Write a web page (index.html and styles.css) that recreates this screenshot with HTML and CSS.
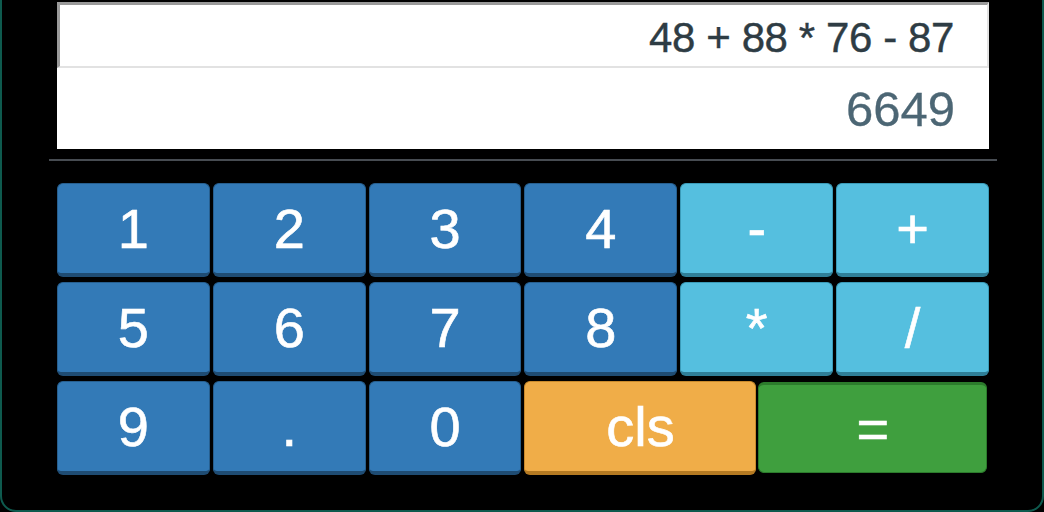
FILE: index.html
```html
<!DOCTYPE html>
<html>
<head>
<meta charset="utf-8">
<link rel="stylesheet" href="styles.css">
</head>
<body>
<div class="calc">
  <div class="screen">
    <div class="expr">48 + 88 * 76 - 87</div>
    <div class="result">6649</div>
  </div>
  <div class="divider"></div>
  <div class="keys">
    <button class="key num">1</button>
    <button class="key num">2</button>
    <button class="key num">3</button>
    <button class="key num">4</button>
    <button class="key op">-</button>
    <button class="key op">+</button>
    <button class="key num">5</button>
    <button class="key num">6</button>
    <button class="key num">7</button>
    <button class="key num">8</button>
    <button class="key op">*</button>
    <button class="key op">/</button>
    <button class="key num">9</button>
    <button class="key num">.</button>
    <button class="key num">0</button>
    <div class="pair">
      <button class="key clear">cls</button>
      <button class="key equals">=</button>
    </div>
  </div>
</div>
</body>
</html>
```
FILE: styles.css
```css
html, body {
  margin: 0;
  padding: 0;
  background: #000;
  overflow: hidden;
}
body {
  font-family: "Liberation Sans", Arial, sans-serif;
}
.calc {
  box-sizing: border-box;
  margin-top: -20px;
  height: 532px;
  border: 2px solid #0e5a4e;
  border-radius: 16px;
  padding: 20px 45px 0 47px;
}
.screen {
  margin: 0 8px;
  background: #fff;
}
.expr {
  box-sizing: border-box;
  height: 66px;
  border-top: 3px solid #9a9a9a;
  border-left: 3px solid #9a9a9a;
  border-bottom: 2px solid #e2e2e2;
  border-right: 2px solid #e2e2e2;
  text-align: right;
  padding: 6px 33px 0 0;
  font-size: 42px;
  line-height: 54px;
  letter-spacing: -0.4px;
  color: #2e3c44;
  -webkit-text-stroke: 0.4px #2e3c44;
}
.result {
  height: 81px;
  text-align: right;
  padding-right: 34px;
  font-size: 49px;
  line-height: 82px;
  color: #4c6674;
  -webkit-text-stroke: 0.3px #4c6674;
}
.divider {
  height: 2px;
  background: #474c52;
  margin-top: 10px;
}
.keys {
  margin: 22px 8px 0 8px;
  display: grid;
  grid-template-columns: repeat(6, 1fr);
  grid-auto-rows: 94px;
  column-gap: 3px;
  row-gap: 5px;
}
.pair {
  grid-column: span 3;
  display: grid;
  grid-template-columns: 232px 1fr;
  column-gap: 2px;
}
.key {
  box-sizing: border-box;
  margin: 0;
  padding: 0;
  font-family: "Liberation Sans", Arial, sans-serif;
  font-size: 56px;
  color: #fff;
  -webkit-text-stroke: 0.6px #fff;
  border-radius: 6px;
  border: 1px solid;
  border-bottom-width: 4px;
  cursor: pointer;
  line-height: 1;
}
.num {
  background: #337ab7;
  border-color: #275f8f;
  border-bottom-color: #1f4c73;
}
.op {
  background: #55bfdf;
  border-color: #3b9bb8;
  border-bottom-color: #2f7f98;
}
.clear {
  background: #f0ad48;
  border-color: #c98a2c;
  border-bottom-color: #b57a22;
}
.equals {
  background: #3f9f3e;
  border-color: #2c7b2c;
  border-top-width: 3px;
  border-bottom-width: 1px;
  margin: 1px 2px 0 0;
  height: 91px;
}
```
